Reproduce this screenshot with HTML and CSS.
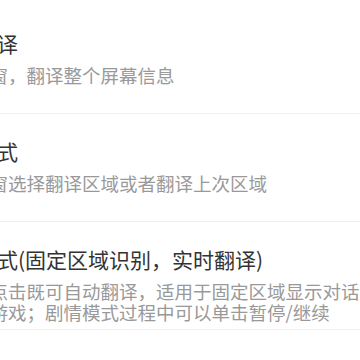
FILE: index.html
```html
<!DOCTYPE html>
<html lang="zh-CN">
<head>
    <meta charset="UTF-8">
    <meta name="viewport" content="width=device-width, initial-scale=1.0">
    <title>翻译模式</title>
    <link rel="stylesheet" href="styles.css">
</head>
<body>
    <div class="mode-list">
        <div class="mode-item">
            <div class="mode-title">全屏翻译</div>
            <div class="mode-desc">点击浮窗，翻译整个屏幕信息</div>
        </div>
        <div class="mode-item">
            <div class="mode-title">区域模式</div>
            <div class="mode-desc">点击浮窗选择翻译区域或者翻译上次区域</div>
        </div>
        <div class="mode-item">
            <div class="mode-title">剧情模式(固定区域识别，实时翻译)</div>
            <div class="mode-desc">开启后点击既可自动翻译，适用于固定区域显示对话框的文字类游戏；剧情模式过程中可以单击暂停/继续</div>
        </div>
    </div>
</body>
</html>
```

FILE: styles.css
```css
* {
    margin: 0;
    padding: 0;
    box-sizing: border-box;
}

html, body {
    overflow: hidden;
}

body {
    background-color: #fff;
    font-family: "Noto Sans CJK SC", "Noto Sans", sans-serif;
}

.mode-list {
    width: 470px;
    margin-left: -66px;
    padding-top: 6px;
}

.mode-item {
    height: 108px;
    padding-top: 23px;
    border-bottom: 1px solid #efefef;
}

.mode-title {
    font-size: 21px;
    line-height: 28px;
    color: #333;
}

.mode-desc {
    margin-top: 8px;
    font-size: 18.5px;
    line-height: 21px;
    color: #999;
}
```
